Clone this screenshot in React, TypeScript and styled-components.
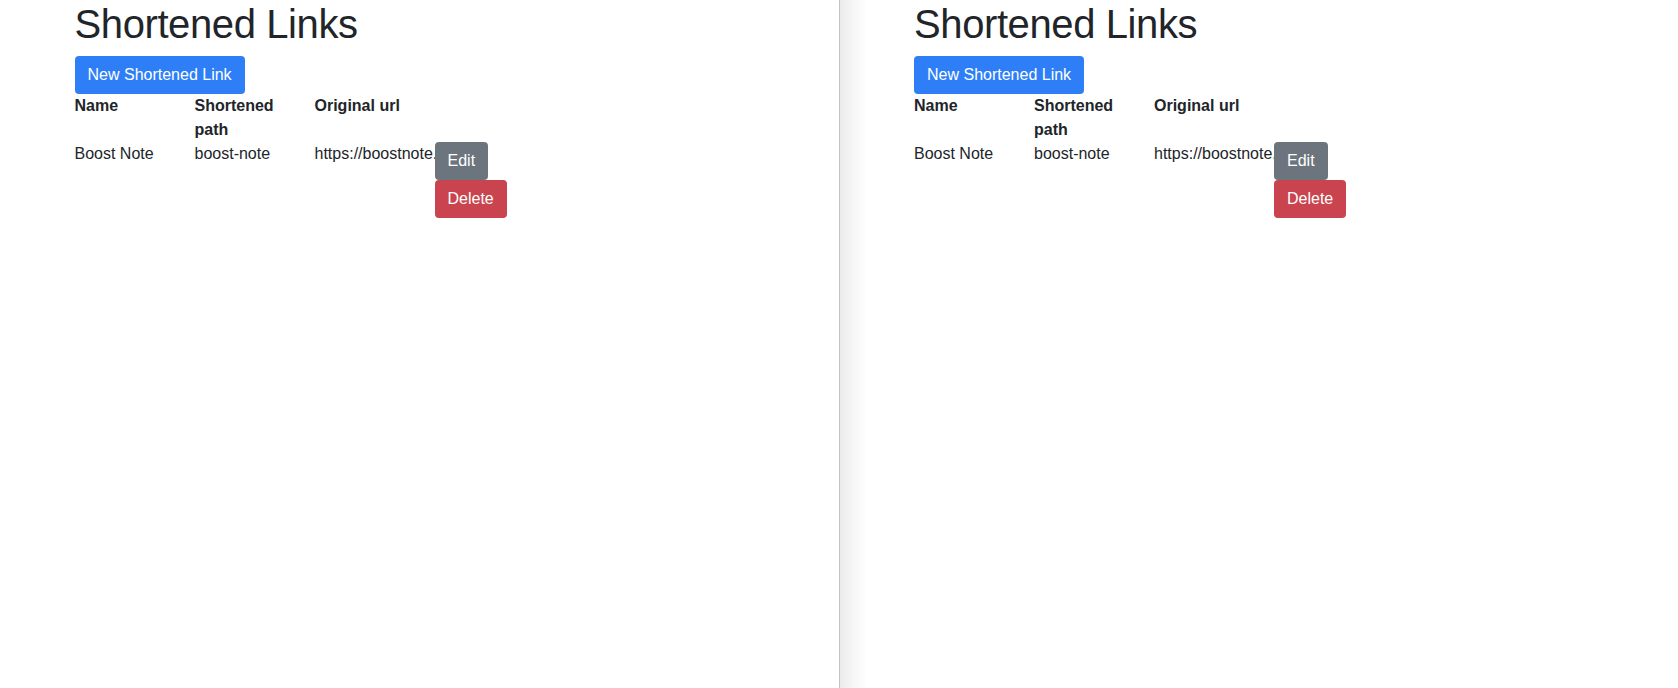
import * as React from 'react'
import styled, { createGlobalStyle } from 'styled-components'

const GlobalStyle = createGlobalStyle`
  html, body {
    margin: 0;
    padding: 0;
    background: #fff;
  }
  body {
    font-family: "Liberation Sans", Arial, Helvetica, sans-serif;
    font-size: 16px;
    line-height: 1.5;
    color: #212529;
  }
  * {
    box-sizing: border-box;
  }
`

const Split = styled.div`
  display: flex;
  width: 100%;
  height: 688px;
  overflow: hidden;
`

const Pane = styled.div<{ $divided?: boolean }>`
  position: relative;
  flex: ${props => (props.$divided ? '1 1 auto' : '0 0 839px')};
  border-left: ${props => (props.$divided ? '1px solid #c4c4c4' : 'none')};
  height: 100%;

  &::before {
    content: '';
    display: ${props => (props.$divided ? 'block' : 'none')};
    position: absolute;
    top: 0;
    left: 0;
    width: 27px;
    height: 100%;
    background: linear-gradient(to right, rgba(0, 0, 0, 0.08), rgba(0, 0, 0, 0.03) 55%, rgba(0, 0, 0, 0));
    pointer-events: none;
  }
`

const Container = styled.div`
  max-width: 720px;
  margin: 0 auto;
  padding: 0 15px;
`

const Title = styled.h1`
  margin: 0 0 8px;
  font-size: 40px;
  font-weight: 500;
  line-height: 1.2;
  letter-spacing: -0.4px;
`

const Button = styled.button<{ $variant: 'primary' | 'secondary' | 'danger' }>`
  display: inline-block;
  vertical-align: middle;
  padding: 6px 12px;
  border: 1px solid transparent;
  border-radius: 4px;
  font-family: inherit;
  font-size: 16px;
  line-height: 1.5;
  color: #fff;
  cursor: pointer;
  background-color: ${props =>
    props.$variant === 'primary' ? '#2e7ff7' : props.$variant === 'secondary' ? '#6c757d' : '#c9444e'};
`

const LinkTable = styled.div`
  display: grid;
  grid-template-columns: repeat(4, 120px);
`

const HeadCell = styled.div`
  padding-right: 14px;
  font-weight: 700;
`

const Cell = styled.div`
  padding-right: 14px;
  white-space: nowrap;
`

const Actions = styled.div`
  padding-right: 14px;
`

const links = [{ name: 'Boost Note', path: 'boost-note', url: 'https://boostnote.io' }]

const ShortenedLinks = () => (
  <Container>
    <Title>Shortened Links</Title>
    <Button $variant="primary">New Shortened Link</Button>
    <LinkTable>
      <HeadCell>Name</HeadCell>
      <HeadCell>Shortened path</HeadCell>
      <HeadCell>Original url</HeadCell>
      <HeadCell />
      {links.map(link => (
        <React.Fragment key={link.path}>
          <Cell>{link.name}</Cell>
          <Cell>{link.path}</Cell>
          <Cell>{link.url}</Cell>
          <Actions>
            <Button $variant="secondary">Edit</Button>
            <Button $variant="danger">Delete</Button>
          </Actions>
        </React.Fragment>
      ))}
    </LinkTable>
  </Container>
)

const App = () => (
  <>
    <GlobalStyle />
    <Split>
      <Pane>
        <ShortenedLinks />
      </Pane>
      <Pane $divided>
        <ShortenedLinks />
      </Pane>
    </Split>
  </>
)

export default App
